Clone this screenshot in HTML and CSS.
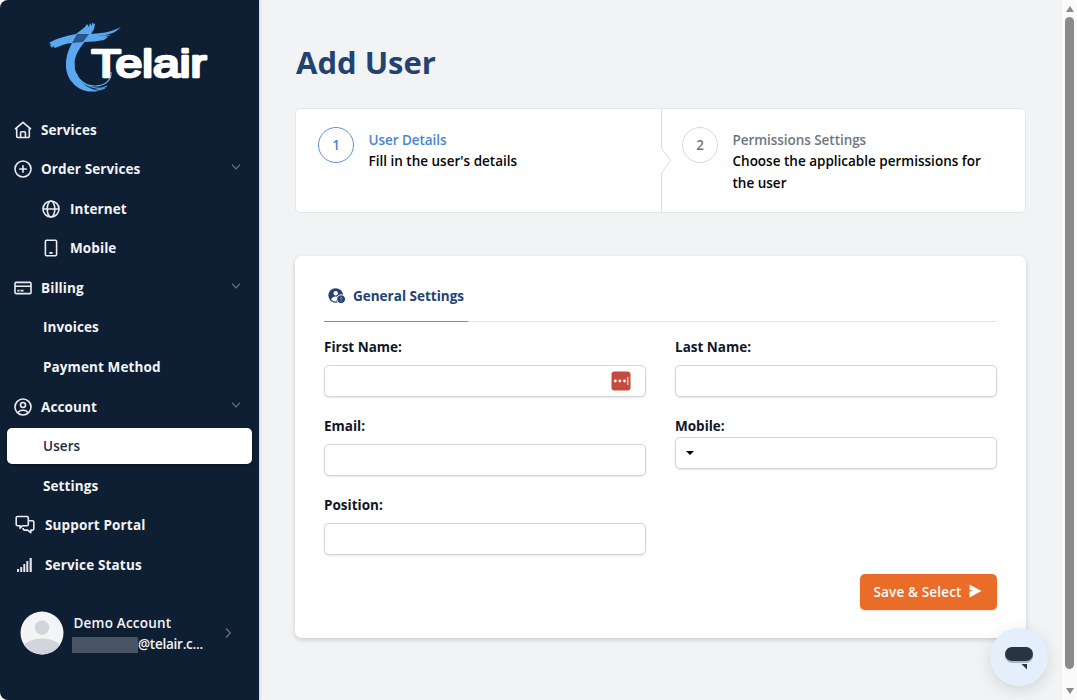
FILE: index.html
```html
<!DOCTYPE html>
<html lang="en">
<head>
    <meta charset="UTF-8">
    <meta name="viewport" content="width=device-width, initial-scale=1.0">
    <title>Add User</title>
    <link rel="stylesheet" href="styles.css">
</head>
<body>
    <div class="app">
        <aside class="sidebar">
            <svg class="logo" width="164" height="76" viewBox="46 19 164 76">
                <g fill="#5aa9f0">
                    <path d="M49 43 C57 38 66 36 76 34 L85 27 L87 24 L89 27 L90 23 L92 26 L92 23 L95 24 L94 29 C91 35 87 39 83 44 C76 53 73 61 75 70 C77 81 87 88 98 91 C88 93 78 90 72 82 C63 71 65 56 72 43 C67 43 60 46 55 48 L53 46 L52 48 L50 45 L51 44 Z"/>
                    <path d="M86 34 C101 34 111 32 121 27 C114 34 108 35 97 36 L111 35 L106 37 L97 37.5 L108 37 L104 40 C98 41 91 42 84 42 Z"/>
                </g>
                <path d="M77 34 L89 34 L83 42 L72 43 Z" fill="#285687"/>
                <g fill="none" stroke="#5aa9f0">
                    <path d="M74 63 C73 78 84 86 95 86 C105 86 112 80 111 72" stroke-width="1.2"/>
                    <path d="M76 73 C80 85 98 92 107 86" stroke-width="1.1"/>
                    <path d="M75 80 C83 91 96 92 105 88" stroke-width="1.1"/>
                </g>
                <text class="logo-text" x="91.5" y="76.5" textLength="115" lengthAdjust="spacingAndGlyphs">Telair</text>
            </svg>

            <nav class="menu">
                <a class="item" href="#">
                    <svg class="icon" viewBox="0 0 18 18"><path d="M1 8.2 9 1.3l8 6.9M2.7 7v8.6q0 .9.9.9h10.8q.9 0 .9-.9V7M6.6 16.3v-4.6q0-1 1-1h2.8q1 0 1 1v4.6"/></svg>
                    <span>Services</span>
                </a>
                <a class="item" href="#">
                    <svg class="icon" viewBox="0 0 18 18"><circle cx="9" cy="9" r="8"/><path d="M9 5.2v7.6M5.2 9h7.6"/></svg>
                    <span>Order Services</span>
                    <svg class="chevron" viewBox="0 0 10 10"><path d="m1 2.7 4 4.1 4-4.1"/></svg>
                </a>
                <a class="item nested" href="#">
                    <svg class="icon" viewBox="0 0 18 18"><circle cx="9" cy="9" r="8"/><ellipse cx="9" cy="9" rx="3.8" ry="8"/><path d="M1 9h16"/></svg>
                    <span>Internet</span>
                </a>
                <a class="item nested" href="#">
                    <svg class="icon" viewBox="0 0 18 18"><rect x="3.4" y="1.3" width="11.2" height="15.4" rx="1.3"/><path d="M7.3 13.9h3.4"/></svg>
                    <span>Mobile</span>
                </a>
                <a class="item" href="#">
                    <svg class="icon" viewBox="0 0 18 18"><rect x="1" y="3.4" width="16" height="11.2" rx="1.2"/><path d="M1 7.3h16M3.4 11.6h2.1m1 0h3"/></svg>
                    <span>Billing</span>
                    <svg class="chevron" viewBox="0 0 10 10"><path d="m1 2.7 4 4.1 4-4.1"/></svg>
                </a>
                <a class="item plain" href="#"><span>Invoices</span></a>
                <a class="item plain" href="#"><span>Payment Method</span></a>
                <a class="item" href="#">
                    <svg class="icon" viewBox="0 0 18 18"><circle cx="9" cy="9" r="8"/><circle cx="9" cy="7" r="2.5"/><path d="M4.2 15.2c.3-2.1 1.8-3 4.8-3s4.5.9 4.8 3"/></svg>
                    <span>Account</span>
                    <svg class="chevron" viewBox="0 0 10 10"><path d="m1 2.7 4 4.1 4-4.1"/></svg>
                </a>
                <a class="item plain active" href="#"><span>Users</span></a>
                <a class="item plain" href="#"><span>Settings</span></a>
                <a class="item wide" href="#">
                    <svg class="icon" viewBox="0 0 20 20"><path d="M2.5 1.5H12q1.3 0 1.3 1.3v6.6q0 1.3-1.3 1.3H7.5L5 13.1v-2.4H2.5q-1.3 0-1.3-1.3V2.8q0-1.3 1.3-1.3ZM13.5 5.8h4q1.3 0 1.3 1.3v6.7q0 1.3-1.3 1.3h-1.7v2.6l-3.2-2.6h-3q-1.5 0-1.5-2"/></svg>
                    <span>Support Portal</span>
                </a>
                <a class="item wide" href="#">
                    <svg class="icon bars" viewBox="0 0 20 20"><path d="M2 17v-3h2v3zM5.2 17v-5h2v5zM8.3 17V9h2v8zM11.3 17V6h2v11zM14.6 17V3h2.2v14z"/></svg>
                    <span>Service Status</span>
                </a>
            </nav>

            <div class="account">
                <svg class="avatar" viewBox="0 0 44 44">
                    <clipPath id="avatarClip"><circle cx="22" cy="22" r="21.5"/></clipPath>
                    <g clip-path="url(#avatarClip)">
                        <rect width="44" height="44" fill="#f3f4f6"/>
                        <circle cx="22" cy="16.6" r="7.2" fill="#d1d5db"/>
                        <ellipse cx="22" cy="40" rx="21" ry="12.5" fill="#d1d5db"/>
                    </g>
                </svg>
                <div class="account-info">
                    <div class="account-name">Demo Account</div>
                    <div class="account-mail"><span class="redacted"></span><span>@telair.c...</span></div>
                </div>
                <svg class="chevron" viewBox="0 0 10 10"><path d="m3 .5 4.3 4.5L3 9.5"/></svg>
            </div>
        </aside>

        <main class="content">
            <h1>Add User</h1>

            <section class="steps">
                <div class="step current">
                    <div class="step-number">1</div>
                    <div class="step-text">
                        <div class="step-title">User Details</div>
                        <div class="step-info">Fill in the user's details</div>
                    </div>
                </div>
                <svg class="step-divider" width="12" height="103" viewBox="0 0 12 103"><path d="M1.5 0v39l9 12.5-9 12.5v39"/></svg>
                <div class="step">
                    <div class="step-number">2</div>
                    <div class="step-text">
                        <div class="step-title">Permissions Settings</div>
                        <div class="step-info">Choose the applicable permissions for<br>the user</div>
                    </div>
                </div>
            </section>

            <section class="card">
                <div class="tabs">
                    <div class="tab">
                        <svg width="18" height="16" viewBox="0 0 18 16">
                            <circle cx="7.7" cy="7.5" r="7.3" fill="#24426f"/>
                            <circle cx="7.7" cy="5.3" r="2.2" fill="#fff"/>
                            <path d="M3.2 11.5c1-2.3 2.3-3 4.5-3 1.2 0 2.1.2 2.8.7L8 13.4c-2 .1-3.6-.5-4.8-1.9Z" fill="#fff"/>
                            <circle cx="13.1" cy="11.2" r="4.4" fill="#24426f" stroke="#fff"/>
                            <path d="M13.1 8.7v2.8m0 1v1.3" stroke="#8ba0bc" stroke-width="1.2"/>
                        </svg>
                        <span>General Settings</span>
                    </div>
                </div>

                <form class="fields">
                    <div class="field">
                        <label for="firstName">First Name:</label>
                        <div class="input-wrap">
                            <input id="firstName" type="text">
                            <svg class="password-icon" width="20" height="20" viewBox="0 0 20 20">
                                <rect x=".5" y=".5" width="19" height="19" rx="3" fill="#c54b3c"/>
                                <g fill="#fff"><circle cx="4.3" cy="10" r="1.4"/><circle cx="8.9" cy="10" r="1.4"/><circle cx="13.5" cy="10" r="1.4"/><path d="M16.3 6h1v8h-1z"/></g>
                            </svg>
                        </div>
                    </div>
                    <div class="field">
                        <label for="lastName">Last Name:</label>
                        <input id="lastName" type="text">
                    </div>
                    <div class="field">
                        <label for="email">Email:</label>
                        <input id="email" type="text">
                    </div>
                    <div class="field tight">
                        <label for="mobile">Mobile:</label>
                        <div class="input-wrap">
                            <input id="mobile" type="text">
                            <span class="caret"></span>
                        </div>
                    </div>
                    <div class="field">
                        <label for="position">Position:</label>
                        <input id="position" type="text">
                    </div>
                </form>

                <div class="actions">
                    <button class="save" type="button">
                        <span>Save &amp; Select</span>
                        <svg width="13" height="14" viewBox="0 0 13 14"><path d="M.5.5 12.5 7 .5 13.5V7.6L4.5 6.8.5 6Z" fill="#fff"/></svg>
                    </button>
                </div>
            </section>
        </main>

        <div class="scrollbar">
            <span class="arrow up"></span>
            <span class="thumb"></span>
            <span class="arrow down"></span>
        </div>
    </div>

    <div class="chat">
        <svg width="30" height="26" viewBox="0 0 30 26">
            <rect x="1" y="2" width="28" height="15" rx="7" fill="#a9b5c4"/>
            <rect x="1" y="1" width="28" height="14" rx="7" fill="#283442"/>
            <path d="M17.5 18H23v5.5Z" fill="#283442"/>
        </svg>
    </div>
</body>
</html>
```
FILE: styles.css
```css
* { box-sizing: border-box; }
body, html {
    margin: 0;
    padding: 0;
    height: 100%;
    overflow: hidden;
    font-family: "Open Sans", "Noto Sans", sans-serif;
    font-size: 13.5px;
    font-weight: 600;
    background-color: #fff;
}
.app {
    display: flex;
    height: 700px;
    overflow: hidden;
    border-radius: 8px;
    background-color: #f2f3f5;
}

/* sidebar */
.sidebar {
    width: 259px;
    flex: none;
    display: flex;
    flex-direction: column;
    background-color: #0f1f33;
    color: #f3f4f6;
    box-shadow: 1px 0 3px rgba(0, 0, 0, 0.15);
}
.logo {
    display: block;
    flex: none;
    margin: 19px 0 0 46px;
}
.logo-text {
    font-family: "Liberation Sans", Arial, sans-serif;
    font-size: 38px;
    font-weight: normal;
    fill: #fff;
    stroke: #fff;
    stroke-width: 2.6px;
    stroke-linejoin: round;
}
.menu {
    display: flex;
    flex-direction: column;
    gap: 3.6px;
    padding: 0 7px;
    margin-top: 16.5px;
}
.item {
    display: flex;
    align-items: center;
    height: 36px;
    padding: 0 11px 0 6.5px;
    gap: 9.5px;
    border-radius: 5px;
    color: inherit;
    font-weight: 700;
    letter-spacing: 0.1px;
    text-decoration: none;
}
.icon {
    width: 18px;
    height: 18px;
    flex: none;
    fill: none;
    stroke: #e9ebef;
    stroke-width: 1.6;
    stroke-linejoin: round;
}
.nested {
    padding-left: 35px;
    gap: 10px;
}
.plain { padding-left: 36px; }
.wide {
    padding-left: 7.5px;
    gap: 10.5px;
    letter-spacing: 0.15px;
}
.wide .icon {
    width: 20px;
    height: 20px;
}
.wide .bars {
    fill: #e1e4e8;
    stroke: none;
}
.active {
    background-color: #fff;
    color: #1b2b40;
    font-weight: 600;
    box-shadow: 0 1px 3px rgba(0, 0, 0, 0.5);
}
.chevron {
    width: 10px;
    height: 10px;
    margin-left: auto;
    margin-bottom: 4px;
    fill: none;
    stroke: #6b7585;
    stroke-width: 1.2;
}
.account {
    display: flex;
    align-items: center;
    height: 44px;
    margin: 27.9px 26px 0 19.5px;
}
.avatar {
    width: 44px;
    height: 44px;
    margin-right: 8.5px;
}
.account .chevron { margin-bottom: 0; }
.account-info { padding-top: 2.4px; }
.account-name {
    padding-left: 1.5px;
    line-height: 21px;
    letter-spacing: 0.2px;
}
.account-mail {
    display: flex;
    align-items: center;
    line-height: 21px;
    letter-spacing: -0.25px;
}
.redacted {
    width: 66px;
    height: 16px;
    background-color: #485364;
}

/* page content */
.content {
    flex: 1;
    padding: 40px 36px 0;
}
h1 {
    margin: 0;
    padding-left: 1px;
    color: #24426f;
    font-size: 31px;
    line-height: 44px;
    font-weight: 700;
}
.steps {
    display: flex;
    height: 105px;
    margin-top: 24px;
    border: 1px solid #e3e5e8;
    border-radius: 5px;
    background-color: #fff;
}
.step {
    display: flex;
    width: 364px;
    padding: 18px 0 0 22px;
    gap: 14.5px;
}
.step-divider {
    flex: none;
    margin-right: -12px;
    fill: none;
    stroke: #dcdde3;
}
.step-number {
    width: 36px;
    height: 36px;
    flex: none;
    border: 1px solid #d7d8df;
    border-radius: 50%;
    line-height: 34px;
    text-align: center;
    color: #6f7682;
}
.step-text {
    line-height: 22px;
    padding-top: 3px;
    white-space: nowrap;
}
.step-title {
    height: 20px;
    color: #6f7682;
    line-height: 21px;
    letter-spacing: -0.05px;
}
.step-info { color: #050505; }
.current .step-number {
    color: #4c84d4;
    border-color: #5b8ee0;
}
.current .step-title { color: #4c84d4; }
.card {
    height: 382px;
    margin-top: 43px;
    padding: 20px 29px 0;
    border-radius: 7px;
    background-color: #fff;
    box-shadow: 0 2px 5px rgba(0, 0, 0, 0.16);
}
.tabs {
    display: flex;
    height: 46px;
    border-bottom: 1px solid #e4e5e9;
}
.tab {
    display: flex;
    align-items: center;
    gap: 7px;
    height: 46px;
    width: 144px;
    padding: 0 0 5px 4px;
    border-bottom: 1px solid #e66f2e;
    color: #24426f;
    font-weight: 700;
    white-space: nowrap;
}
.fields {
    display: grid;
    grid-template-columns: 322px 322px;
    grid-auto-rows: 79px;
    column-gap: 29px;
    padding-top: 15px;
}
.field label {
    display: block;
    height: 28px;
    line-height: 20px;
    font-weight: 700;
    color: #101527;
}
.tight label { height: 21px; }
.input-wrap { position: relative; }
.field input {
    display: block;
    width: 322px;
    height: 32.4px;
    border: 1px solid #d3d5dd;
    border-radius: 5px;
    background-color: #fff;
    box-shadow: 0 1px 2px rgba(0, 0, 0, 0.1);
}
.password-icon {
    position: absolute;
    top: 6px;
    right: 15px;
}
.caret {
    position: absolute;
    top: 14px;
    left: 11px;
    border: 4px solid transparent;
    border-top-color: #000;
    border-bottom: 0;
}
.actions {
    display: flex;
    justify-content: flex-end;
}
.save {
    display: flex;
    align-items: center;
    gap: 8px;
    width: 137px;
    height: 36px;
    padding: 0 0 0 13.5px;
    border: 0;
    border-radius: 5px;
    background-color: #e96d29;
    color: #fff;
    font: inherit;
    letter-spacing: 0.15px;
    box-shadow: 0 1px 2px rgba(0, 0, 0, 0.15);
}
.save svg { margin-bottom: 2px; }

/* scrollbar */
.scrollbar {
    display: flex;
    flex-direction: column;
    align-items: center;
    width: 15px;
    flex: none;
    padding: 6px 0;
    background-color: #fafafa;
}
.arrow {
    border: 4px solid transparent;
}
.up { border-bottom: 6px solid #8b8b8b; border-top: 0; }
.down { border-top: 6px solid #8b8b8b; border-bottom: 0; }
.thumb {
    width: 9px;
    height: 652px;
    margin: 5px 0 19px;
    border-radius: 5px;
    background-color: #8b8b8b;
}

/* chat bubble over the page */
.chat {
    position: absolute;
    left: 990px;
    top: 628px;
    display: flex;
    align-items: center;
    justify-content: center;
    width: 58px;
    height: 58px;
    padding-top: 3px;
    padding-right: 1px;
    border-radius: 50%;
    background-color: #e5effc;
    box-shadow: 0 4px 16px rgba(0, 0, 0, 0.13);
}
```
